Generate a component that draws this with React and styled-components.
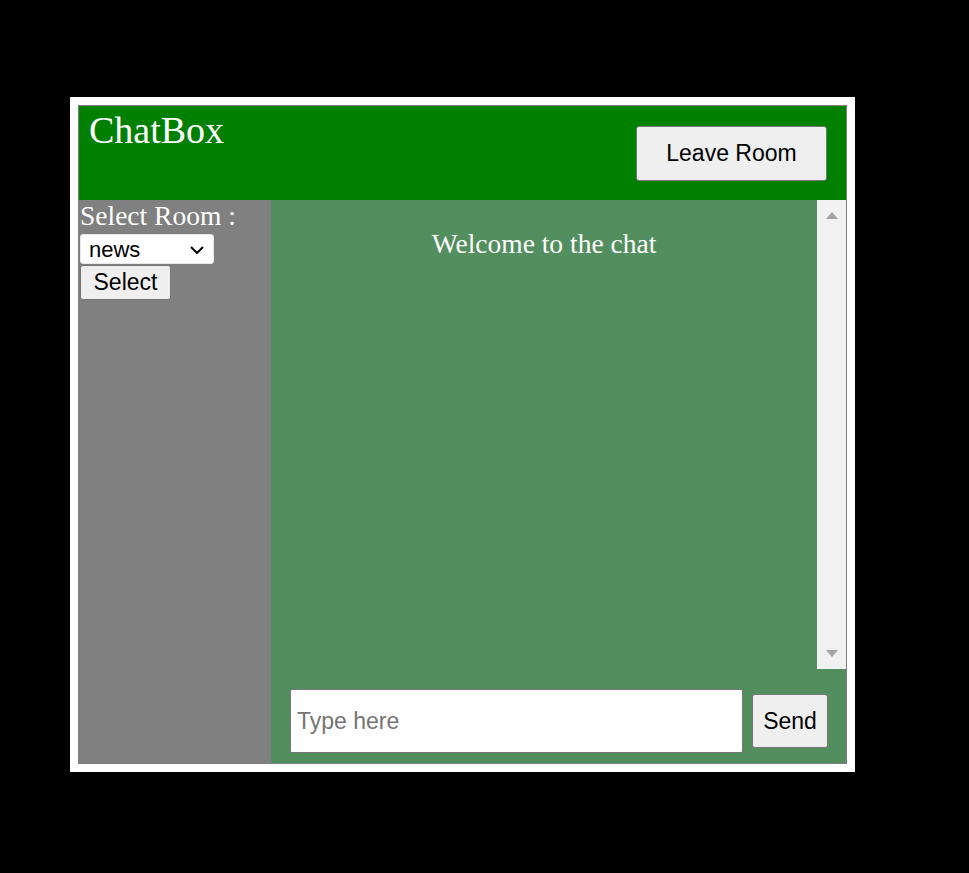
import React from 'react';
import styled, { createGlobalStyle } from 'styled-components';

const GlobalStyle = createGlobalStyle`
  html, body {
    margin: 0;
    background: #000;
  }
  body {
    min-height: 873px;
    font-family: "Liberation Serif", "Times New Roman", serif;
  }
`;

const Frame = styled.div`
  box-sizing: border-box;
  width: 785px;
  height: 675px;
  margin: 97px 0 0 70px;
  padding: 8px;
  background: #fff;
`;

const ChatWindow = styled.div`
  box-sizing: border-box;
  height: 100%;
  border: 1px solid #808080;
  display: grid;
  grid-template-rows: 94px 1fr;
`;

const Header = styled.header`
  display: flex;
  justify-content: space-between;
  align-items: flex-start;
  background: #008000;
`;

const Title = styled.h1`
  margin: 0;
  padding: 2px 0 0 10px;
  font-size: 38px;
  font-weight: normal;
  line-height: normal;
  color: #fff;
`;

const Button = styled.button`
  font-family: "Liberation Sans", Arial, sans-serif;
  font-size: 23px;
  color: #000;
  background: #efefef;
  border: 1px solid #767676;
  border-radius: 3px;
  padding: 0;
  line-height: normal;
  cursor: pointer;
`;

const LeaveButton = styled(Button)`
  align-self: center;
  width: 191px;
  height: 55px;
  margin-right: 19px;
`;

const Body = styled.div`
  display: grid;
  grid-template-columns: 192px 1fr;
  min-height: 0;
`;

const Sidebar = styled.aside`
  background: #808080;
  padding-left: 1px;
  display: flex;
  flex-direction: column;
  align-items: flex-start;
`;

const RoomLabel = styled.label`
  font-size: 27.5px;
  color: #fff;
  line-height: normal;
`;

const SelectWrap = styled.div`
  position: relative;
  margin-top: 2px;
`;

const RoomSelect = styled.select`
  appearance: none;
  display: block;
  box-sizing: border-box;
  width: 134px;
  height: 30px;
  padding: 0 0 0 8px;
  font-family: "Liberation Sans", Arial, sans-serif;
  font-size: 22px;
  background: #fff;
  color: #000;
  border: 1px solid #e8e8e8;
  border-radius: 3px;
`;

const Chevron = styled.svg`
  position: absolute;
  right: 10px;
  top: 12px;
  pointer-events: none;
`;

const SelectButton = styled(Button)`
  width: 91px;
  height: 35px;
  margin-top: 1px;
`;

const ChatArea = styled.section`
  display: grid;
  grid-template-rows: 469px 1fr;
  background: #538f5e;
  min-height: 0;
`;

const MessagePane = styled.div`
  display: grid;
  grid-template-columns: 1fr 29px;
  min-height: 0;
`;

const Messages = styled.div`
  overflow: hidden;
  text-align: center;
  color: #fff;
`;

const Scrollbar = styled.div`
  display: flex;
  flex-direction: column;
  justify-content: space-between;
  align-items: center;
  padding: 12px 0;
  background: #f1f1f1;
`;

const Arrow = styled.span`
  width: 0;
  height: 0;
  border-left: 6.5px solid transparent;
  border-right: 6.5px solid transparent;
  ${(props) =>
    props.down
      ? 'border-top: 7px solid #a3a3a3;'
      : 'border-bottom: 7px solid #a3a3a3;'}
`;

const Welcome = styled.p`
  margin: 0;
  padding-top: 28px;
  font-size: 27.5px;
  line-height: normal;
`;

const Composer = styled.form`
  display: flex;
  align-items: center;
  gap: 9px;
  padding: 20px 18px 10px 19px;
`;

const MessageInput = styled.input`
  flex: 1;
  min-width: 0;
  box-sizing: border-box;
  height: 64px;
  padding: 0 6px;
  font-family: "Liberation Sans", Arial, sans-serif;
  font-size: 23px;
  background: #fff;
  border: 1px solid #767676;
  border-radius: 2px;

  &::placeholder {
    color: #757575;
  }
`;

const SendButton = styled(Button)`
  width: 76px;
  height: 54px;
`;

export default function App() {
  return (
    <>
      <GlobalStyle />
      <Frame>
        <ChatWindow>
          <Header>
            <Title>ChatBox</Title>
            <LeaveButton type="button">Leave Room</LeaveButton>
          </Header>
          <Body>
            <Sidebar>
              <RoomLabel htmlFor="room">Select Room :</RoomLabel>
              <SelectWrap>
                <RoomSelect id="room" defaultValue="news">
                  <option value="news">news</option>
                  <option value="sports">sports</option>
                  <option value="music">music</option>
                </RoomSelect>
                <Chevron width="14" height="8" viewBox="0 0 14 8">
                  <path d="M1 1l6 6 6-6" fill="none" stroke="#000" strokeWidth="2" />
                </Chevron>
              </SelectWrap>
              <SelectButton type="button">Select</SelectButton>
            </Sidebar>
            <ChatArea>
              <MessagePane>
                <Messages>
                  <Welcome>Welcome to the chat</Welcome>
                </Messages>
                <Scrollbar>
                  <Arrow />
                  <Arrow down />
                </Scrollbar>
              </MessagePane>
              <Composer onSubmit={(e) => e.preventDefault()}>
                <MessageInput type="text" placeholder="Type here" />
                <SendButton type="submit">Send</SendButton>
              </Composer>
            </ChatArea>
          </Body>
        </ChatWindow>
      </Frame>
    </>
  );
}
